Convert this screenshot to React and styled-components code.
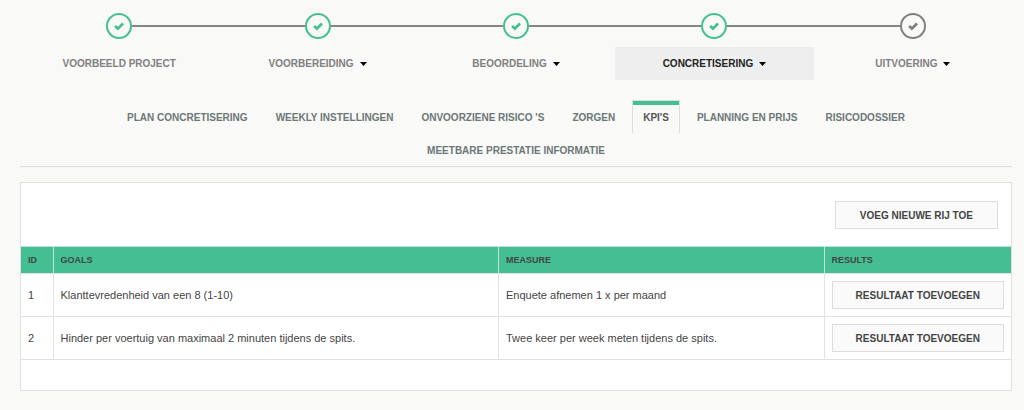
import React, { useState } from 'react';
import styled, { createGlobalStyle } from 'styled-components';

const steps = [
  { name: 'Voorbeeld project', done: true },
  { name: 'Voorbereiding', done: true, menu: true },
  { name: 'Beoordeling', done: true, menu: true },
  { name: 'Concretisering', done: true, menu: true },
  { name: 'Uitvoering', done: false, menu: true },
];

const tabs = [
  'Plan concretisering',
  'Weekly instellingen',
  "Onvoorziene risico 's",
  'Zorgen',
  "KPI's",
  'Planning en prijs',
  'Risicodossier',
  'Meetbare prestatie informatie',
];

const rows = [
  { id: 1, goal: 'Klanttevredenheid van een 8 (1-10)', measure: 'Enquete afnemen 1 x per maand' },
  { id: 2, goal: 'Hinder per voertuig van maximaal 2 minuten tijdens de spits.', measure: 'Twee keer per week meten tijdens de spits.' },
];

const Check = () => (
  <svg width="12" height="10" viewBox="0 0 12 10" aria-hidden="true">
    <path d="M2.1 5 L4.9 7.6 L10 2.5" fill="none" stroke="currentColor" strokeWidth="2.7" />
  </svg>
);

const Caret = () => (
  <svg width="7" height="4" viewBox="0 0 7 4" aria-hidden="true">
    <path d="M0 0 H7 L3.5 4 Z" fill="#000" />
  </svg>
);

export default function App() {
  const [step, setStep] = useState('Concretisering');
  const [tab, setTab] = useState("KPI's");

  return (
    <Page>
      <GlobalStyle />
      <Steps>
        {steps.map((s) => (
          <Step key={s.name}>
            <Track>
              <Circle $done={s.done}><Check /></Circle>
            </Track>
            <StepButton type="button" $active={step === s.name} onClick={() => {setStep(s.name)}}>
              {s.name}
              {s.menu && <Caret />}
            </StepButton>
          </Step>
        ))}
      </Steps>

      <Tabs>
        {tabs.map((t) => (
          <Tab key={t} type="button" $active={tab === t} onClick={() => {setTab(t)}}>{t}</Tab>
        ))}
      </Tabs>

      <Panel>
        <Toolbar>
          <Button type="button">Voeg nieuwe rij toe</Button>
        </Toolbar>
        <Table>
          <thead>
            <tr>
              <IdHead>ID</IdHead>
              <GoalHead>Goals</GoalHead>
              <Head>Measure</Head>
              <ResultHead>Results</ResultHead>
            </tr>
          </thead>
          <tbody>
            {rows.map((r) => (
              <tr key={r.id}>
                <Cell>{r.id}</Cell>
                <Cell>{r.goal}</Cell>
                <Cell>{r.measure}</Cell>
                <Cell><Button type="button" $wide>Resultaat toevoegen</Button></Cell>
              </tr>
            ))}
          </tbody>
        </Table>
        <Footer />
      </Panel>
    </Page>
  )
}


const GlobalStyle = createGlobalStyle`
  * {
    box-sizing: border-box;
  }
  body {
    margin: 0;
    background-color: #f9f9f7;
    color: #444444;
    font-family: "Liberation Sans", Arial, sans-serif;
    font-size: 11px;
  }
  button {
    font-family: inherit;
    cursor: pointer;
  }
`;

const Page = styled.div`
  padding: 13px 12px 20px 20px;
`;

const Steps = styled.div`
  display: flex;
`;

const Track = styled.div`
  display: flex;
  align-items: center;
  margin-bottom: 8px;

  &::before,
  &::after {
    content: "";
    flex: 1;
    height: 2px;
    background-color: #868686;
  }
`;

const Step = styled.div`
  flex: 1;

  &:first-child ${Track}::before,
  &:last-child ${Track}::after {
    background-color: transparent;
  }
`;

const Circle = styled.div`
  display: flex;
  align-items: center;
  justify-content: center;
  width: 26px;
  height: 26px;
  border: 2px solid;
  border-radius: 50%;
  color: ${(props) => (props.$done ? '#43bf93' : '#808080')};
`;

const StepButton = styled.button`
  display: flex;
  align-items: center;
  justify-content: center;
  gap: 6px;
  width: 100%;
  height: 33px;
  padding: 0;
  border: 0;
  background-color: ${(props) => (props.$active ? '#eeeeee' : 'transparent')};
  color: ${(props) => (props.$active ? '#222222' : '#808080')};
  font-size: 10px;
  font-weight: bold;
  text-transform: uppercase;
`;

const Tabs = styled.div`
  display: flex;
  flex-wrap: wrap;
  justify-content: center;
  column-gap: 6px;
  margin-top: 20px;
  padding: 0 40px;
  border-bottom: 1px solid #dddddd;
`;

const Tab = styled.button`
  height: 33px;
  padding: 0 10px;
  border: 1px solid ${(props) => (props.$active ? '#dddddd' : 'transparent')};
  border-bottom: 0;
  background-color: transparent;
  box-shadow: ${(props) => (props.$active ? 'inset 0 4px #43bf93' : 'none')};
  color: ${(props) => (props.$active ? '#555555' : '#6c7777')};
  font-size: 10px;
  font-weight: bold;
  text-transform: uppercase;
`;

const Panel = styled.div`
  margin-top: 15px;
  border: 1px solid #e0e0e0;
  background-color: #ffffff;
`;

const Toolbar = styled.div`
  display: flex;
  justify-content: flex-end;
  padding: 18px 13px 17px;
`;

const Button = styled.button`
  width: ${(props) => (props.$wide ? '100%' : 'auto')};
  height: 28px;
  padding: 0 ${(props) => (props.$wide ? '0' : '24px')};
  border: 1px solid #dddddd;
  background-color: #fafafa;
  color: #444444;
  font-size: 10px;
  font-weight: bold;
  text-transform: uppercase;
  white-space: nowrap;
`;

const Table = styled.table`
  width: 100%;
  border-collapse: collapse;
  table-layout: fixed;
`;

const Head = styled.th`
  height: 27px;
  padding: 0 7px;
  border: 1px solid #c4e0d4;
  border-bottom-color: #e2e2e2;
  background-color: #43bf93;
  font-size: 9px;
  text-align: left;
  text-transform: uppercase;

  &:first-child {
    border-left: 0;
  }
  &:last-child {
    border-right: 0;
  }
`;

const IdHead = styled(Head)`
  width: 32px;
`;

const GoalHead = styled(Head)`
  width: 45%;
`;

const ResultHead = styled(Head)`
  width: 187px;
`;

const Cell = styled.td`
  height: 42px;
  padding: 7px;
  border: 1px solid #e2e2e2;

  &:first-child {
    border-left: 0;
  }
  &:last-child {
    border-right: 0;
  }
`;

const Footer = styled.div`
  height: 30px;
`;
